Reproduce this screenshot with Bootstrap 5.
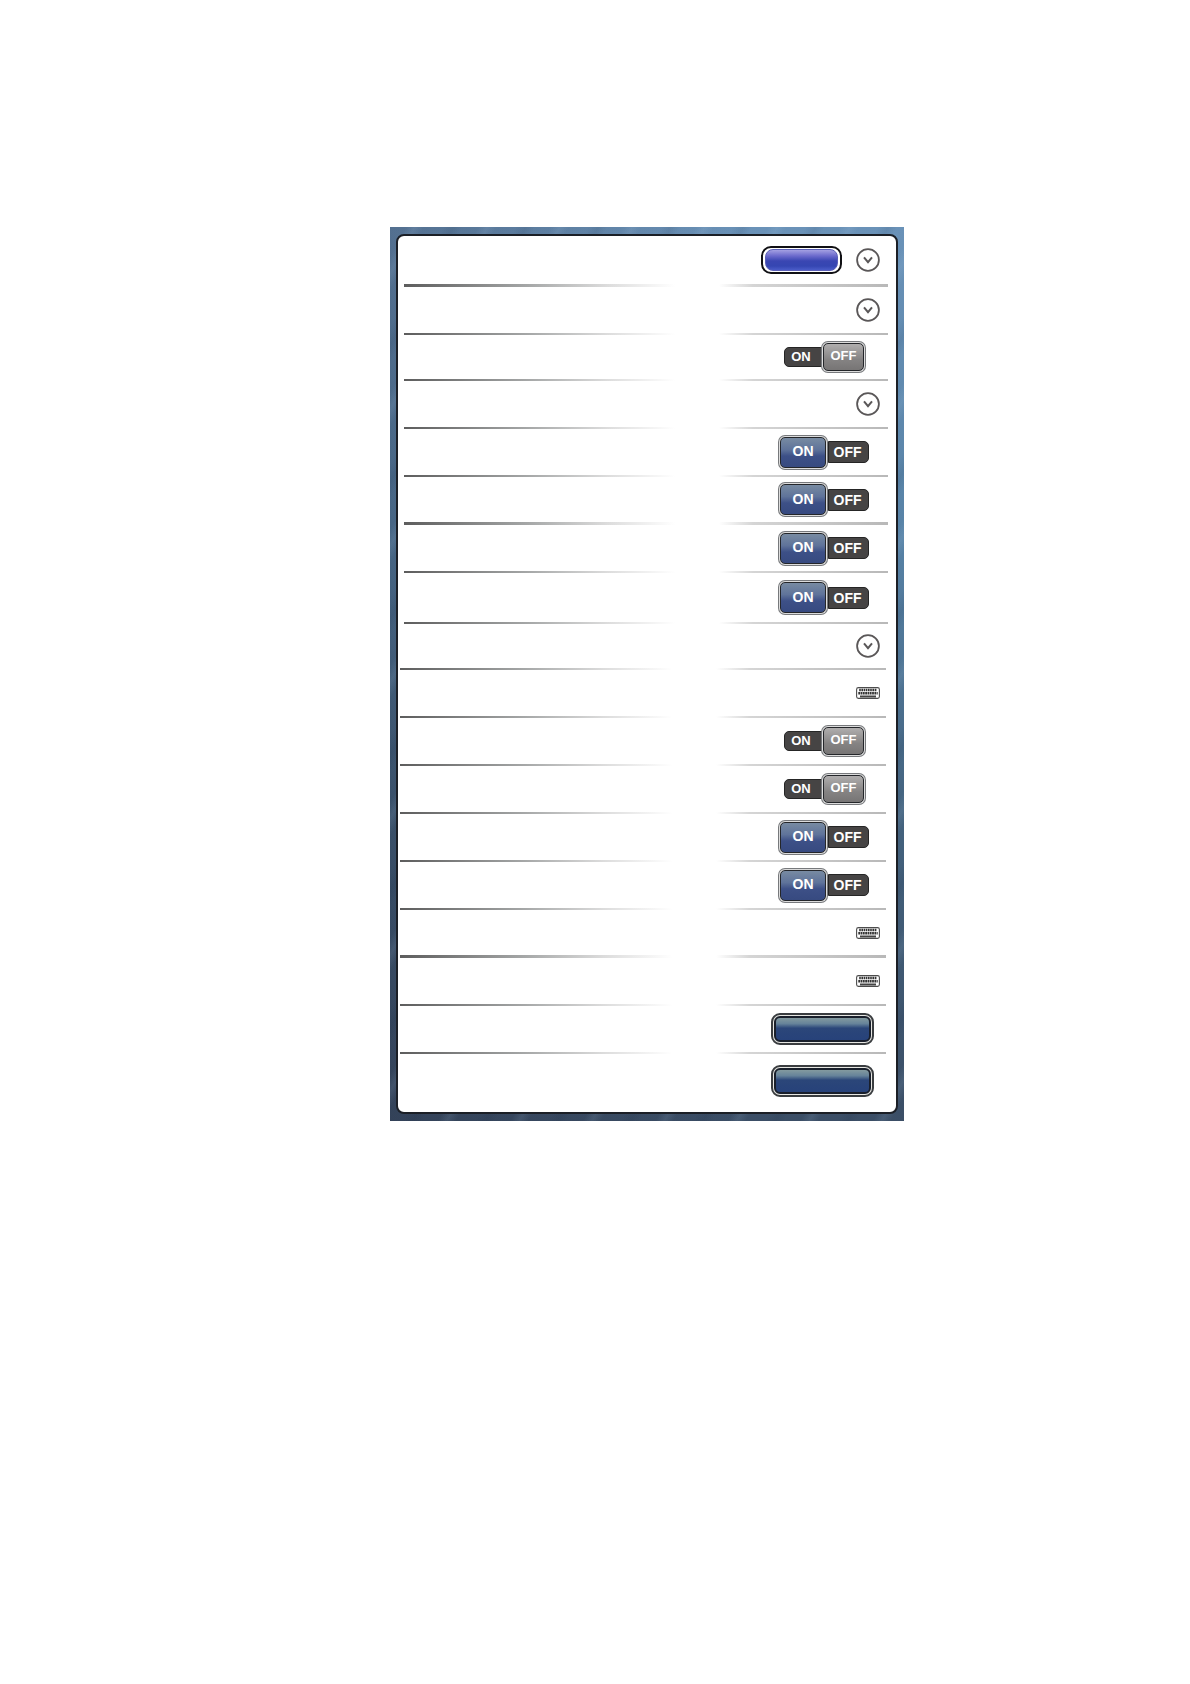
<!DOCTYPE html>
<html lang="en">
<head>
<meta charset="utf-8">
<meta name="viewport" content="width=device-width, initial-scale=1">
<title>Settings</title>
<link rel="stylesheet" href="https://cdn.jsdelivr.net/npm/bootstrap@5.3.0/dist/css/bootstrap.min.css">
<style>
body { background: #fff; font-family: "Liberation Sans", Arial, sans-serif; }
.page-area { padding: 227px 0 48px 104px; }
.panel-frame {
  width: 100%; max-width: 514px; padding: 7px 6px;
  background:
    repeating-linear-gradient(118deg, rgba(255,255,255,0) 0 14px, rgba(190,220,245,.10) 22px, rgba(255,255,255,0) 30px 47px, rgba(10,25,50,.08) 56px, rgba(255,255,255,0) 64px),
    linear-gradient(90deg, rgba(35,40,60,.32), rgba(35,40,60,0) 70%),
    linear-gradient(180deg, #6a92b8, #5782a6 35%, #44637f 65%, #3b4e66);
}
.panel-sheet { background: #fff; border: 2px solid #1b1f26; border-radius: 8px; padding-bottom: 4px; }
.set-upper { margin: 0 8px 0 6px; }
.set-lower { margin: 0 10px 0 2px; }
.set-row { min-height: 48px; padding-right: 6px; border-bottom: 2px solid; border-image: linear-gradient(90deg, #5c5c5c, #a3a5a5 25%, #dcdcdc 42%, #fff 56%, #fff 65%, #d5d5d5 72%, #b8b8b8) 1; }
.set-upper .set-row { padding-right: 8px; }
.set-tall { min-height: 51px; }
.set-short { min-height: 46px; }
.set-thick { border-bottom-width: 3px; }
.set-last { min-height: 54px; border: 0; }
.round-btn { width: 24px; height: 24px; }
.round-btn svg, .key-btn svg { display: block; }
.blue-pill { width: 81px; height: 28px; margin-right: 14px; padding: 1px 2px; border: 2px solid #101014; border-radius: 10px; background: #fff; }
.pill-fill { display: block; height: 22px; border-radius: 8px; border: 1px solid #5a5fb8; background: linear-gradient(#a3a0e2, #6a69cc 30%, #3a46b2 55%, #3546b2 80%, #4a5cc8); }
.navy-btn { width: 103px; height: 32px; margin-right: 6px; padding: 1px; border: 2px solid #3a3d40; border-radius: 9px; background: #e6e6e2; }
.navy-fill { display: block; height: 26px; border: 2px solid #191f2b; border-radius: 6px; background: linear-gradient(#839a9f, #66839a 26%, #2b4679 46%, #27427a); }
.toggle { cursor: pointer; font-weight: 700; line-height: 16px; color: #fff; margin-right: 14px; font-size: 13px; }
.toggle-on { margin-right: 11px; font-size: 14px; }
.side { display: flex; align-items: center; justify-content: center; background: #464444; border: 1px solid #252525; }
.knob { z-index: 1; border: 1px solid #24262a; border-radius: 5px; box-shadow: 0 0 0 1px #dcdcdc, 0 0 0 2px #77797c; }
.toggle .side-on { width: 38px; height: 20px; border-radius: 5px 0 0 5px; padding-right: 4px; }
.toggle .side-off { width: 41px; height: 28px; margin: 2px 2px 2px 1px; background: linear-gradient(#b0aeae, #858383 60%, #777575); padding-bottom: 2px; }
.toggle-on .side-on { width: 46px; height: 31px; margin: 2px 2px 2px 2px; border-radius: 5px; padding: 0 0 2px; background: linear-gradient(#788ba2, #5f739a 40%, #3d5087 62%, #374a80); }
.toggle-on .side-off { width: 41px; height: 22px; margin: 0; border-radius: 0 5px 5px 0; padding: 0 2px 0 0; background: #464444; }
</style>
</head>
<body>
<svg class="d-none" aria-hidden="true">
  <symbol id="chev" viewBox="0 0 24 24">
    <circle cx="12" cy="12" r="10.9" fill="#fff" stroke="#5a5758" stroke-width="1.8"/>
    <path d="M8 9.4 12 14.2l4-4.8" fill="none" stroke="#5a5758" stroke-width="2"/>
  </symbol>
  <symbol id="keys" viewBox="0 0 24 12">
    <rect x=".6" y=".6" width="22.8" height="10.8" rx="1.8" fill="#fff" stroke="#4c4c4c" stroke-width="1.1"/>
    <path d="M3.2 3h17.8" stroke="#333" stroke-width="2.4" stroke-dasharray="1.6 .6"/>
    <path d="M2.3 6.3h19.4" stroke="#333" stroke-width="2.5" stroke-dasharray="1.8 .5"/>
    <path d="M4 9.5h16" stroke="#444" stroke-width="2"/>
  </symbol>
</svg>
<main class="page-area d-flex justify-content-center">
  <section class="panel-frame" aria-label="Settings">
    <div class="panel-sheet">
      <div class="set-upper">
        <div class="set-row set-tall set-thick d-flex align-items-center justify-content-end">
          <button type="button" class="blue-pill" aria-label="Current value"><span class="pill-fill"></span></button>
          <button type="button" class="round-btn btn p-0 border-0" aria-label="Expand"><svg width="24" height="24"><use href="#chev"/></svg></button>
        </div>
        <div class="set-row d-flex align-items-center justify-content-end">
          <button type="button" class="round-btn btn p-0 border-0" aria-label="Expand"><svg width="24" height="24"><use href="#chev"/></svg></button>
        </div>
        <div class="set-row set-short d-flex align-items-center justify-content-end">
          <label class="toggle position-relative d-flex align-items-center"><input type="checkbox" role="switch" class="visually-hidden"><span class="side side-on">ON</span><span class="side side-off knob">OFF</span></label>
        </div>
        <div class="set-row d-flex align-items-center justify-content-end">
          <button type="button" class="round-btn btn p-0 border-0" aria-label="Expand"><svg width="24" height="24"><use href="#chev"/></svg></button>
        </div>
        <div class="set-row d-flex align-items-center justify-content-end">
          <label class="toggle toggle-on position-relative d-flex align-items-center"><input type="checkbox" role="switch" class="visually-hidden" checked><span class="side side-on knob">ON</span><span class="side side-off">OFF</span></label>
        </div>
        <div class="set-row set-thick d-flex align-items-center justify-content-end">
          <label class="toggle toggle-on position-relative d-flex align-items-center"><input type="checkbox" role="switch" class="visually-hidden" checked><span class="side side-on knob">ON</span><span class="side side-off">OFF</span></label>
        </div>
        <div class="set-row d-flex align-items-center justify-content-end">
          <label class="toggle toggle-on position-relative d-flex align-items-center"><input type="checkbox" role="switch" class="visually-hidden" checked><span class="side side-on knob">ON</span><span class="side side-off">OFF</span></label>
        </div>
        <div class="set-row set-tall d-flex align-items-center justify-content-end">
          <label class="toggle toggle-on position-relative d-flex align-items-center"><input type="checkbox" role="switch" class="visually-hidden" checked><span class="side side-on knob">ON</span><span class="side side-off">OFF</span></label>
        </div>
      </div>
      <div class="set-lower">
        <div class="set-row set-short d-flex align-items-center justify-content-end">
          <button type="button" class="round-btn btn p-0 border-0" aria-label="Expand"><svg width="24" height="24"><use href="#chev"/></svg></button>
        </div>
        <div class="set-row d-flex align-items-center justify-content-end">
          <button type="button" class="key-btn btn p-0 border-0" aria-label="Keyboard"><svg width="24" height="12"><use href="#keys"/></svg></button>
        </div>
        <div class="set-row d-flex align-items-center justify-content-end">
          <label class="toggle position-relative d-flex align-items-center"><input type="checkbox" role="switch" class="visually-hidden"><span class="side side-on">ON</span><span class="side side-off knob">OFF</span></label>
        </div>
        <div class="set-row d-flex align-items-center justify-content-end">
          <label class="toggle position-relative d-flex align-items-center"><input type="checkbox" role="switch" class="visually-hidden"><span class="side side-on">ON</span><span class="side side-off knob">OFF</span></label>
        </div>
        <div class="set-row d-flex align-items-center justify-content-end">
          <label class="toggle toggle-on position-relative d-flex align-items-center"><input type="checkbox" role="switch" class="visually-hidden" checked><span class="side side-on knob">ON</span><span class="side side-off">OFF</span></label>
        </div>
        <div class="set-row d-flex align-items-center justify-content-end">
          <label class="toggle toggle-on position-relative d-flex align-items-center"><input type="checkbox" role="switch" class="visually-hidden" checked><span class="side side-on knob">ON</span><span class="side side-off">OFF</span></label>
        </div>
        <div class="set-row set-thick d-flex align-items-center justify-content-end">
          <button type="button" class="key-btn btn p-0 border-0" aria-label="Keyboard"><svg width="24" height="12"><use href="#keys"/></svg></button>
        </div>
        <div class="set-row d-flex align-items-center justify-content-end">
          <button type="button" class="key-btn btn p-0 border-0" aria-label="Keyboard"><svg width="24" height="12"><use href="#keys"/></svg></button>
        </div>
        <div class="set-row d-flex align-items-center justify-content-end">
          <button type="button" class="navy-btn" aria-label="Action"><span class="navy-fill"></span></button>
        </div>
        <div class="set-row set-last d-flex align-items-center justify-content-end">
          <button type="button" class="navy-btn" aria-label="Action"><span class="navy-fill"></span></button>
        </div>
      </div>
    </div>
  </section>
</main>
<script src="https://cdn.jsdelivr.net/npm/bootstrap@5.3.0/dist/js/bootstrap.bundle.min.js"></script>
</body>
</html>
